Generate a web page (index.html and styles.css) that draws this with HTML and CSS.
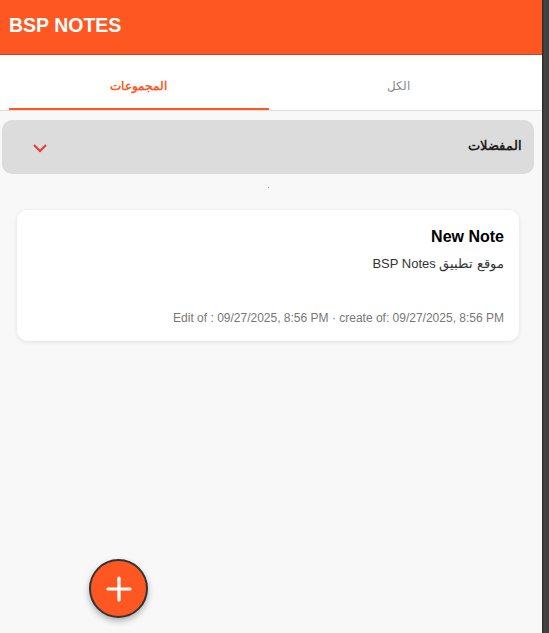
FILE: index.html
```html
<!DOCTYPE html>
<html lang="ar">
<head>
<meta charset="utf-8">
<link rel="stylesheet" href="styles.css">
</head>
<body>
<div class="frame">
  <div class="app">
    <header class="topbar"><h1 class="brand">BSP NOTES</h1></header>
    <nav class="tabs" dir="rtl">
      <div class="tab">الكل</div>
      <div class="tab active">المجموعات</div>
    </nav>
    <main class="content">
      <section class="group" dir="rtl">
        <span class="group-title">المفضلات</span>
        <svg class="chev" width="16" height="10" viewBox="0 0 16 10"><path d="M2 2 L8 8 L14 2" fill="none" stroke="#e53935" stroke-width="2"/></svg>
      </section>
      <div class="dot-row"><span class="dot"></span></div>
      <article class="card" dir="rtl">
        <h2 class="card-title">New Note</h2>
        <p class="card-body">موقع تطبيق BSP Notes</p>
        <p class="card-meta" dir="ltr">Edit of : 09/27/2025, 8:56 PM · create of: 09/27/2025, 8:56 PM</p>
      </article>
    </main>
    <button class="fab" aria-label="add">
      <svg width="26" height="26" viewBox="0 0 26 26"><path d="M13 2 V24 M2 13 H24" stroke="#fff" stroke-width="3.2" stroke-linecap="round"/></svg>
    </button>
  </div>
  <div class="edge"></div>
</div>
</body>
</html>
```
FILE: styles.css
```css
html, body { margin: 0; padding: 0; height: 100%; }
body { font-family: "Liberation Sans", Arial, sans-serif; background: #f8f8f8; overflow: hidden; }
.frame { display: flex; height: 633px; }
.app { width: 542px; position: relative; background: #f8f8f8; display: flex; flex-direction: column; }
.edge { flex: 1; background: linear-gradient(to right, #2e2e2e 0, #2e2e2e 1px, #454545 2px, #3e3e3e 100%); }
.topbar { height: 55px; background: #ff5722; border-bottom: 1px solid #c8461d; box-sizing: border-box; display: flex; align-items: center; padding-left: 9px; }
.brand { margin: 0; color: #fff; font-size: 19.5px; font-weight: bold; position: relative; top: -2px; }
.tabs { height: 56px; background: #fff; display: flex; border-bottom: 1px solid #ddd; box-sizing: border-box; padding: 0 14px 0 9px; }
.tab { flex: 1; display: flex; align-items: center; justify-content: center; font-size: 12px; color: #888; padding-top: 8px; box-sizing: border-box; border-bottom: 2px solid transparent; }
.tab.active { color: #ff5722; border-bottom-color: #ff5722; font-weight: bold; }
.content { padding: 9px 8px 0 2px; }
.group { height: 54px; background: #dcdcdc; border-radius: 10px; display: flex; align-items: center; justify-content: space-between; padding: 0 12px 0 30px; box-sizing: border-box; }
.group-title { font-size: 13px; font-weight: bold; color: #222; position: relative; top: -2px; }
.chev { position: relative; top: 1px; }
.dot-row { height: 36px; display: flex; justify-content: center; }
.dot { width: 1px; height: 1px; background: #999; margin-top: 13px; }
.card { margin: 0 15px 0 15px; background: #fff; border-radius: 10px; box-shadow: 0 1px 4px rgba(0,0,0,0.1); padding: 18px 15px 16px 15px; height: 131px; box-sizing: border-box; display: flex; flex-direction: column; }
.card-title { margin: 0; font-size: 16px; font-weight: bold; color: #000; }
.card-body { margin: 10px 0 0; font-size: 13px; color: #333; }
.card-meta { margin: auto 0 0; font-size: 12px; color: #777; text-align: right; }
.fab { position: absolute; left: 89px; top: 559px; width: 59px; height: 59px; border-radius: 50%; background: #ff5722; border: 2px solid #333; box-shadow: 0 3px 6px rgba(0,0,0,0.3); display: flex; align-items: center; justify-content: center; padding: 0; }
```
